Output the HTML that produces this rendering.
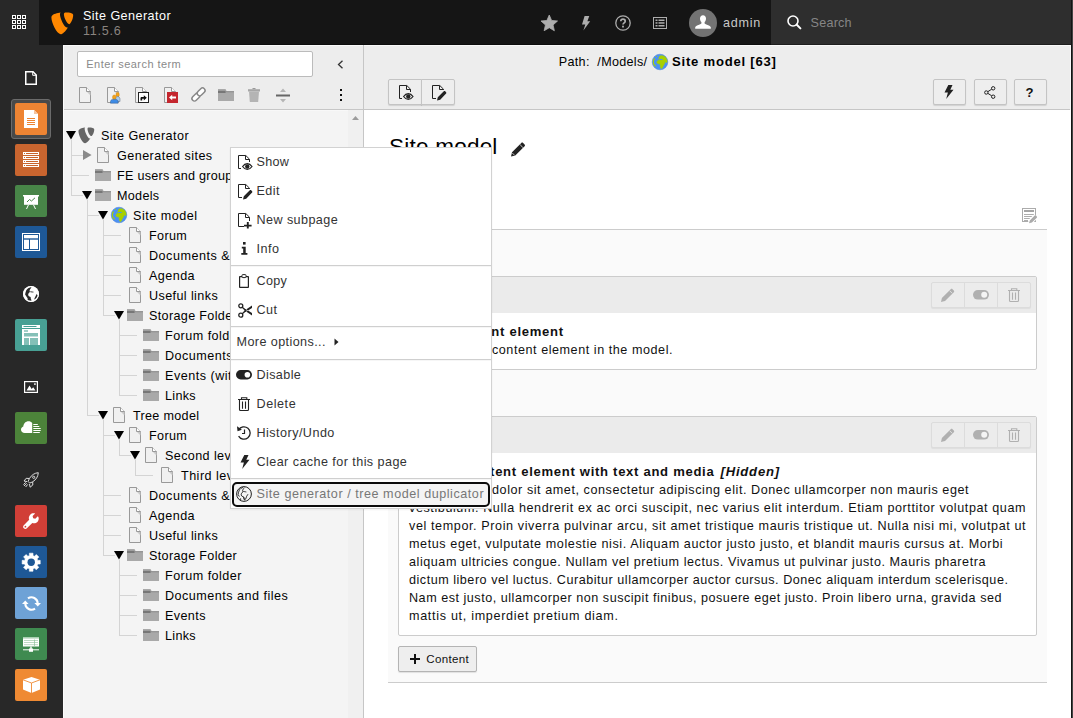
<!DOCTYPE html>
<html lang="en"><head><meta charset="utf-8"><title>Site Generator [TYPO3 CMS 11.5.6]</title>
<style>
html,body{margin:0;padding:0}
body{width:1073px;height:718px;overflow:hidden;position:relative;background:#fff;font-family:"Liberation Sans",sans-serif;font-size:12.6px;color:#000}
.t{position:absolute;white-space:pre;display:block}
.b{position:absolute;box-sizing:border-box}
svg{position:absolute;overflow:visible}

</style></head>
<body>
<!-- module content --><div class="b" style="left:364px;top:45px;width:707px;height:65px;background:#ededed;border-bottom:1px solid #c6c6c6"></div><div class="b" style="left:364px;top:45px;width:707px;height:1px;background:#f9f9f9;"></div><div class="b" style="left:1070px;top:45px;width:1px;height:65px;background:#f9f9f9;"></div><div class="b" style="left:1071px;top:45px;width:1px;height:673px;background:#141414;"></div><div class="b" style="left:1072px;top:45px;width:1px;height:673px;background:#444;"></div><span class="t" style="left:558.8px;top:53.0px;line-height:18px;font-size:12.6px;color:#000;letter-spacing:0.304px;">Path:  /Models/</span><svg style="left:652px;top:54px;" width="16" height="16" viewBox="0 0 16 16"><circle cx="8" cy="8" r="7.800" fill="#4c90f4" stroke="#447fd6" stroke-width=".5"/><path fill="#a7d000" d="M8.500 1.700 11 1.800 13.300 3 14.700 5 15.200 7.400 14.700 8.700 13.700 7.600 12.700 9.400 11.300 11.800 10.300 14.100 9.300 14.800 8.500 13.800 8.200 11.800 8 10.100 6 9.800 4.800 8.700 5 7.400 6 6.600 7.300 6.200 6.700 5.500 7 4.400 7.300 2.700z" stroke="#a7d000" stroke-width=".5" stroke-linejoin="round"/><rect x="7.100" y="5.100" width="3.600" height="1" rx=".5" fill="#4c90f4"/><path fill="#a7d000" d="M1 6 1.800 4.400 2.700 4 2.800 5.400 2 6.700 1.800 8.700 2.700 10.800 3.800 11.800 3.700 12.800 2.300 12.100 1.200 10.400 .8 8.400zM4 2h1v.9H4z"/></svg><span class="t" style="left:672px;top:53.0px;line-height:18px;font-size:13.08px;color:#000;font-weight:700;letter-spacing:0.774px;">Site model [63]</span><div class="b" style="left:388px;top:79px;width:34px;height:26px;background:#eeeeee;border:1px solid #c4c4c4;border-radius:2px 0 0 2px;box-shadow:0 1px 1px rgba(0,0,0,.12)"></div><div class="b" style="left:421px;top:79px;width:34px;height:26px;background:#eeeeee;border:1px solid #c4c4c4;border-radius:0 2px 2px 0;box-shadow:0 1px 1px rgba(0,0,0,.12)"></div><div class="b" style="left:933px;top:79px;width:33px;height:26px;background:#eeeeee;border:1px solid #c4c4c4;border-radius:2px;box-shadow:0 1px 1px rgba(0,0,0,.12)"></div><div class="b" style="left:974px;top:79px;width:33px;height:26px;background:#eeeeee;border:1px solid #c4c4c4;border-radius:2px;box-shadow:0 1px 1px rgba(0,0,0,.12)"></div><div class="b" style="left:1014px;top:79px;width:33px;height:26px;background:#eeeeee;border:1px solid #c4c4c4;border-radius:2px;box-shadow:0 1px 1px rgba(0,0,0,.12)"></div><svg style="left:399px;top:85px;" width="12" height="14" viewBox="0 0 12 14"><path d="M.5.500h7.300l3.700 3.700V13.500H.5z" fill="none" stroke="#222" stroke-width="1"/><path d="M7.500.8v3.700h3.700" fill="none" stroke="#222" stroke-width="1"/></svg><div class="b" style="left:402px;top:92px;width:10px;height:8px;background:#eee;"></div><svg style="left:402.7px;top:93px;" width="10.6" height="7" viewBox="0 0 10.6 7"><path d="M.6 3.500C1.900 1.600 3.500.6 5.300.6S8.700 1.600 10 3.500C8.700 5.400 7.100 6.400 5.300 6.400S1.900 5.400.6 3.500z" fill="#eee" stroke="#222" stroke-width="1.200"/><circle cx="5.300" cy="3.500" r="2.200" fill="#222"/></svg><svg style="left:432px;top:85px;" width="12" height="14" viewBox="0 0 12 14"><path d="M.5.500h7.300l3.700 3.700V13.500H.5z" fill="none" stroke="#222" stroke-width="1"/><path d="M7.500.8v3.700h3.700" fill="none" stroke="#222" stroke-width="1"/></svg><div class="b" style="left:436px;top:90px;width:10px;height:10px;background:#eee;"></div><svg style="left:436.5px;top:90.5px;" width="9.5" height="9.5" viewBox="0 0 9.5 9.5"><path d="M0 9.500 .8 6.300 6.800.3c.4-.4 1-.4 1.400 0l.9.900c.4.400.4 1 0 1.400L3.200 8.700z" fill="#222"/></svg><svg style="left:944px;top:85px;" width="10" height="14" viewBox="0 0 10 14"><path d="M4.300 0h4.200L6.300 4.700h3.200L2.200 14l1.700-6.500H.5z" fill="#222"/></svg><svg style="left:984.4px;top:85.5px;" width="12" height="13" viewBox="0 0 12 13"><circle cx="2.300" cy="6.500" r="1.700" fill="none" stroke="#222" stroke-width="1"/><circle cx="9.200" cy="2.300" r="1.700" fill="none" stroke="#222" stroke-width="1"/><circle cx="9.200" cy="10.700" r="1.700" fill="none" stroke="#222" stroke-width="1"/><path d="M3.800 5.700 7.700 3.200M3.800 7.300 7.700 9.800" stroke="#222" stroke-width="1" fill="none"/></svg><span class="t" style="left:1025.5px;top:83.5px;line-height:18px;font-size:13.08px;color:#111;font-weight:700;letter-spacing:-1.031px;">?</span><span class="t" style="left:389px;top:132.4px;line-height:30px;font-size:22.5px;color:#000;letter-spacing:0.230px;">Site model</span><svg style="left:510.5px;top:141.5px;" width="15" height="15" viewBox="0 0 15 15"><path d="M0 14.500 1 10.200 10.300.900c.5-.5 1.300-.5 1.800 0l1.500 1.500c.5.500.5 1.300 0 1.800L4.300 13.500z" fill="#222"/><path d="M9.200 2.800 11.800 5.400" stroke="#fff" stroke-width=".8"/><path d="M1.300 11 3.600 13.300" stroke="#fff" stroke-width=".7"/></svg><svg style="left:1022px;top:208px;" width="16" height="16" viewBox="0 0 16 16"><rect x=".5" y=".5" width="13" height="13" fill="#fff" stroke="#ababab"/><rect x="2" y="2" width="10" height="2" fill="#a4a4a4"/><rect x="2" y="6" width="10" height="1" fill="#adadad"/><rect x="2" y="8" width="9" height="1" fill="#adadad"/><rect x="2" y="10" width="6" height="1" fill="#adadad"/><rect x="2" y="12" width="4" height="1" fill="#adadad"/><path d="M6.300 12 12.300 6 16 9.700 10.500 15.200l-4.500 1.300z" fill="#fff"/><path d="M7 15.300 7.800 12.500 12.700 7.600c.4-.4.900-.4 1.300 0l.8.800c.4.400.4.900 0 1.300L9.900 14.600z" fill="#ababab"/></svg><div class="b" style="left:388px;top:229px;width:659px;height:454px;background:#fafafa;border-top:1px solid #ccc;border-bottom:1px solid #ccc"></div><div class="b" style="left:398px;top:276px;width:639px;height:94px;background:#fff;border:1px solid #ccc;border-radius:2px"></div><div class="b" style="left:399px;top:277px;width:637px;height:36px;background:#ebebeb;"></div><div class="b" style="left:931px;top:282px;width:100px;height:26px;background:#ececec;border:1px solid #dcdcdc;border-radius:2px;box-shadow:0 1px 1px rgba(0,0,0,.06)"></div><div class="b" style="left:964px;top:283px;width:1px;height:24px;background:#dcdcdc;"></div><div class="b" style="left:997px;top:283px;width:1px;height:24px;background:#dcdcdc;"></div><svg style="left:940.5px;top:287.5px;" width="14" height="14" viewBox="0 0 14 14"><path d="M0 14 .9 10 9.700 1.200c.5-.5 1.300-.5 1.800 0l1.300 1.300c.5.500.5 1.300 0 1.800L4 13.100z" fill="#b0b0b0"/><path d="M8.700 2.800 11.200 5.300" stroke="#ececec" stroke-width=".8"/></svg><svg style="left:972.5px;top:290px;" width="16" height="10" viewBox="0 0 16 10"><rect x="0" y="0" width="16" height="9.600" rx="4.800" fill="#b0b0b0"/><circle cx="11.200" cy="4.800" r="3" fill="#f4f4f4"/></svg><svg style="left:1008px;top:287.5px;" width="12" height="14" viewBox="0 0 12 14"><path d="M0 2.500h12M3.500 2.500V.700h5.300V2.500M1.500 2.500v10q0 1 1 1h7q1 0 1-1v-10" fill="none" stroke="#b0b0b0" stroke-width="1.100"/><path d="M4.500 4.500v7.200M7.500 4.500v7.200" fill="none" stroke="#b0b0b0" stroke-width="1.100"/></svg><span class="t" style="left:416.7px;top:323.0px;line-height:18px;font-size:13.08px;color:#111;font-weight:700;letter-spacing:0.711px;">First content element</span><span class="t" style="left:409px;top:341.0px;line-height:18px;font-size:12.6px;color:#111;letter-spacing:0.548px;">This is a first content element in the model.</span><div class="b" style="left:398px;top:416px;width:639px;height:220px;background:#fff;border:1px solid #ccc;border-radius:2px"></div><div class="b" style="left:399px;top:417px;width:637px;height:36px;background:#ebebeb;"></div><div class="b" style="left:931px;top:422px;width:100px;height:26px;background:#ececec;border:1px solid #dcdcdc;border-radius:2px;box-shadow:0 1px 1px rgba(0,0,0,.06)"></div><div class="b" style="left:964px;top:423px;width:1px;height:24px;background:#dcdcdc;"></div><div class="b" style="left:997px;top:423px;width:1px;height:24px;background:#dcdcdc;"></div><svg style="left:940.5px;top:427.5px;" width="14" height="14" viewBox="0 0 14 14"><path d="M0 14 .9 10 9.700 1.200c.5-.5 1.300-.5 1.800 0l1.300 1.300c.5.500.5 1.300 0 1.800L4 13.100z" fill="#b0b0b0"/><path d="M8.700 2.800 11.200 5.300" stroke="#ececec" stroke-width=".8"/></svg><svg style="left:972.5px;top:430px;" width="16" height="10" viewBox="0 0 16 10"><rect x="0" y="0" width="16" height="9.600" rx="4.800" fill="#b0b0b0"/><circle cx="11.200" cy="4.800" r="3" fill="#f4f4f4"/></svg><svg style="left:1008px;top:427.5px;" width="12" height="14" viewBox="0 0 12 14"><path d="M0 2.500h12M3.500 2.500V.700h5.300V2.500M1.500 2.500v10q0 1 1 1h7q1 0 1-1v-10" fill="none" stroke="#b0b0b0" stroke-width="1.100"/><path d="M4.500 4.500v7.200M7.500 4.500v7.200" fill="none" stroke="#b0b0b0" stroke-width="1.100"/></svg><span class="t" style="left:409px;top:463.0px;line-height:18px;font-size:13.08px;color:#111;font-weight:700;letter-spacing:0.697px;">Second content element with text and media </span><span class="t" style="left:720.5px;top:463.0px;line-height:18px;font-size:13.08px;color:#111;font-weight:700;font-style:italic;letter-spacing:0.796px;">[Hidden]</span><span class="t" style="left:409px;top:481.0px;line-height:18px;font-size:12.6px;color:#111;letter-spacing:0.561px;">Lorem ipsum dolor sit amet, consectetur adipiscing elit. Donec ullamcorper non mauris eget</span><span class="t" style="left:409px;top:499.0px;line-height:18px;font-size:12.6px;color:#111;letter-spacing:0.583px;">vestibulum. Nulla hendrerit ex ac orci suscipit, nec varius elit interdum. Etiam porttitor volutpat quam</span><span class="t" style="left:409px;top:517.0px;line-height:18px;font-size:12.6px;color:#111;letter-spacing:0.600px;">vel tempor. Proin viverra pulvinar arcu, sit amet tristique mauris tristique ut. Nulla nisi mi, volutpat ut</span><span class="t" style="left:409px;top:535.0px;line-height:18px;font-size:12.6px;color:#111;letter-spacing:0.585px;">metus eget, vulputate molestie nisi. Aliquam auctor justo justo, et blandit mauris cursus at. Morbi</span><span class="t" style="left:409px;top:553.0px;line-height:18px;font-size:12.6px;color:#111;letter-spacing:0.550px;">aliquam ultricies congue. Nullam vel pretium lectus. Vivamus ut pulvinar justo. Mauris pharetra</span><span class="t" style="left:409px;top:571.0px;line-height:18px;font-size:12.6px;color:#111;letter-spacing:0.517px;">dictum libero vel luctus. Curabitur ullamcorper auctor cursus. Donec aliquam interdum scelerisque.</span><span class="t" style="left:409px;top:589.0px;line-height:18px;font-size:12.6px;color:#111;letter-spacing:0.517px;">Nam est justo, ullamcorper non suscipit finibus, posuere eget justo. Proin libero urna, gravida sed</span><span class="t" style="left:409px;top:607.0px;line-height:18px;font-size:12.6px;color:#111;letter-spacing:0.690px;">mattis ut, imperdiet pretium diam.</span><div class="b" style="left:398px;top:646px;width:79px;height:26px;background:#eeeeee;border:1px solid #b4b4b4;border-radius:2px;box-shadow:0 1px 1px rgba(0,0,0,.1)"></div><svg style="left:410px;top:654px;" width="10" height="10" viewBox="0 0 10 10"><path d="M5 0v10M0 5h10" stroke="#111" stroke-width="2"/></svg><span class="t" style="left:426.3px;top:650.7px;line-height:16px;font-size:11.55px;color:#111;letter-spacing:0.315px;">Content</span><!-- page tree --><div class="b" style="left:63px;top:45px;width:301px;height:673px;background:#f4f4f4;border-right:1px solid #c6c6c6"></div><div class="b" style="left:63px;top:45px;width:300px;height:65px;background:#ededed;border-bottom:1px solid #c6c6c6"></div><div class="b" style="left:63px;top:45px;width:300px;height:1px;background:#fafafa;"></div><div class="b" style="left:63px;top:45px;width:1px;height:673px;background:#fcfcfc;"></div><div class="b" style="left:64px;top:110px;width:284px;height:1px;background:#f8f8f8;"></div><div class="b" style="left:77px;top:51px;width:236px;height:26px;background:#fff;border:1px solid #bbb;border-radius:2px"></div><span class="t" style="left:86.3px;top:56.099999999999994px;line-height:16px;font-size:11.03px;color:#8a8a8a;letter-spacing:0.433px;">Enter search term</span><svg style="left:336.5px;top:60px;" width="7" height="9" viewBox="0 0 7 9"><path d="M5.500 .7 1.500 4.500l4 3.800" fill="none" stroke="#333" stroke-width="1.300"/></svg><svg style="left:79px;top:87px;" width="12" height="16" viewBox="0 0 12 16"><path d="M.5.500h7l4 4V15.500H.5z" fill="#f0f0f0" stroke="#999" stroke-width="1"/><path d="M7.500.5v4h4z" fill="#fff"/><path d="M7.500 4.500h4v4z" fill="#c9c9c9"/><path d="M7.500.5v4h4" fill="none" stroke="#999" stroke-width="1"/></svg><svg style="left:107px;top:87px;" width="12" height="16" viewBox="0 0 12 16"><path d="M.5.500h7l4 4V15.500H.5z" fill="#f0f0f0" stroke="#999" stroke-width="1"/><path d="M7.500.5v4h4z" fill="#fff"/><path d="M7.500 4.500h4v4z" fill="#c9c9c9"/><path d="M7.500.5v4h4" fill="none" stroke="#999" stroke-width="1"/></svg><svg style="left:110px;top:91.5px;" width="11" height="11.5" viewBox="0 0 11 11.5"><rect x="6" y=".5" width="3.200" height="4.200" rx="1.400" fill="#f3a21b" stroke="#c98410" stroke-width=".4"/><path d="M5.200 9V7c0-1.500 1-2.400 2.400-2.400S10 5.500 10 7v2.500z" fill="#a9cdf0" stroke="#5a6f86" stroke-width=".5"/><rect x="2.600" y="3" width="3.400" height="4.500" rx="1.500" fill="#f3a21b" stroke="#c98410" stroke-width=".4"/><path d="M.5 11.200V9.600C.5 8 2 7.200 4.300 7.200S8.100 8 8.100 9.600v1.600z" fill="#3d8be6" stroke="#3b5f8a" stroke-width=".5"/></svg><svg style="left:135px;top:87px;" width="12" height="16" viewBox="0 0 12 16"><path d="M.5.500h7l4 4V15.500H.5z" fill="#f0f0f0" stroke="#999" stroke-width="1"/><path d="M7.500.5v4h4z" fill="#fff"/><path d="M7.500 4.500h4v4z" fill="#c9c9c9"/><path d="M7.500.5v4h4" fill="none" stroke="#999" stroke-width="1"/></svg><svg style="left:138px;top:92px;" width="11" height="11" viewBox="0 0 11 11"><rect x=".5" y=".5" width="10" height="10" fill="#fff" stroke="#222"/><path d="M2.500 8.500V6.200c0-.8.500-1.300 1.300-1.300h2V3.200L8.800 5.800 5.800 8.400V6.700H4.200v1.800z" fill="#111"/></svg><svg style="left:164px;top:87px;" width="12" height="16" viewBox="0 0 12 16"><path d="M.5.500h7l4 4V15.500H.5z" fill="#f0f0f0" stroke="#999" stroke-width="1"/><path d="M7.500.5v4h4z" fill="#fff"/><path d="M7.500 4.500h4v4z" fill="#c9c9c9"/><path d="M7.500.5v4h4" fill="none" stroke="#999" stroke-width="1"/></svg><svg style="left:167px;top:92px;" width="11" height="11" viewBox="0 0 11 11"><rect x="0" y="0" width="11" height="11" fill="#c4262e"/><path d="M2 5.500 5.200 2.700v1.900h3.800v1.800H5.200v1.900z" fill="#fff"/></svg><svg style="left:190.5px;top:87px;" width="15" height="15" viewBox="0 0 15 15"><g transform="rotate(-45 7.500 7.500)" fill="#fff" stroke="#888" stroke-width="1.500"><rect x="-.7" y="5" width="9" height="5" rx="2.500"/><rect x="6.700" y="5" width="9" height="5" rx="2.500"/></g></svg><svg style="left:218px;top:89px;" width="16" height="12" viewBox="0 0 16 12"><path d="M0 0h7.500l1.200 2.200H16V12H0z" fill="#a9a9a9"/><path d="M0 1.800h7.600V4H0z" fill="#777"/><path d="M7.600 2.200H16v1H8.200z" fill="#8a8a8a"/></svg><svg style="left:248px;top:88px;" width="12" height="14" viewBox="0 0 12 14"><path d="M4.500 0h3v1.200h-3z" fill="#999"/><path d="M0 1.200h12v2.300H0z" fill="#a6a6a6"/><path d="M1 3.500h10l-.8 10.500H1.800z" fill="#b4b4b4"/></svg><svg style="left:276px;top:87.5px;" width="14" height="15" viewBox="0 0 14 15"><path d="M7 .5 10 4H4z" fill="#b5b5b5"/><rect x="0" y="6.500" width="14" height="2" fill="#666"/><path d="M7 14.500 10 11H4z" fill="#b5b5b5"/></svg><svg style="left:339.5px;top:89px;" width="2" height="12" viewBox="0 0 2 12"><rect width="2" height="2" y="0" fill="#111"/><rect width="2" height="2" y="5" fill="#111"/><rect width="2" height="2" y="10" fill="#111"/></svg><div class="b" style="left:348px;top:110px;width:15px;height:608px;background:#f0f0f0;"></div><svg style="left:352px;top:116px;" width="7" height="4" viewBox="0 0 7 4"><path d="M3.500 0 7 4H0z" fill="#9c9c9c"/></svg><div class="b" style="left:71px;top:140px;width:1px;height:56px;background:#d4d4d4;"></div><div class="b" style="left:71px;top:155px;width:12px;height:1px;background:#d4d4d4;"></div><div class="b" style="left:71px;top:175px;width:18px;height:1px;background:#d4d4d4;"></div><div class="b" style="left:71px;top:195px;width:12px;height:1px;background:#d4d4d4;"></div><div class="b" style="left:87px;top:200px;width:1px;height:216px;background:#d4d4d4;"></div><div class="b" style="left:87px;top:215px;width:12px;height:1px;background:#d4d4d4;"></div><div class="b" style="left:103px;top:220px;width:1px;height:96px;background:#d4d4d4;"></div><div class="b" style="left:103px;top:235px;width:18px;height:1px;background:#d4d4d4;"></div><div class="b" style="left:103px;top:255px;width:18px;height:1px;background:#d4d4d4;"></div><div class="b" style="left:103px;top:275px;width:18px;height:1px;background:#d4d4d4;"></div><div class="b" style="left:103px;top:295px;width:18px;height:1px;background:#d4d4d4;"></div><div class="b" style="left:103px;top:315px;width:12px;height:1px;background:#d4d4d4;"></div><div class="b" style="left:119px;top:320px;width:1px;height:76px;background:#d4d4d4;"></div><div class="b" style="left:119px;top:335px;width:18px;height:1px;background:#d4d4d4;"></div><div class="b" style="left:119px;top:355px;width:18px;height:1px;background:#d4d4d4;"></div><div class="b" style="left:119px;top:375px;width:18px;height:1px;background:#d4d4d4;"></div><div class="b" style="left:119px;top:395px;width:18px;height:1px;background:#d4d4d4;"></div><div class="b" style="left:87px;top:415px;width:12px;height:1px;background:#d4d4d4;"></div><div class="b" style="left:103px;top:420px;width:1px;height:136px;background:#d4d4d4;"></div><div class="b" style="left:103px;top:435px;width:12px;height:1px;background:#d4d4d4;"></div><div class="b" style="left:119px;top:440px;width:1px;height:16px;background:#d4d4d4;"></div><div class="b" style="left:119px;top:455px;width:12px;height:1px;background:#d4d4d4;"></div><div class="b" style="left:135px;top:460px;width:1px;height:16px;background:#d4d4d4;"></div><div class="b" style="left:135px;top:475px;width:18px;height:1px;background:#d4d4d4;"></div><div class="b" style="left:103px;top:495px;width:18px;height:1px;background:#d4d4d4;"></div><div class="b" style="left:103px;top:515px;width:18px;height:1px;background:#d4d4d4;"></div><div class="b" style="left:103px;top:535px;width:18px;height:1px;background:#d4d4d4;"></div><div class="b" style="left:103px;top:555px;width:12px;height:1px;background:#d4d4d4;"></div><div class="b" style="left:119px;top:560px;width:1px;height:76px;background:#d4d4d4;"></div><div class="b" style="left:119px;top:575px;width:18px;height:1px;background:#d4d4d4;"></div><div class="b" style="left:119px;top:595px;width:18px;height:1px;background:#d4d4d4;"></div><div class="b" style="left:119px;top:615px;width:18px;height:1px;background:#d4d4d4;"></div><div class="b" style="left:119px;top:635px;width:18px;height:1px;background:#d4d4d4;"></div><svg style="left:66px;top:131px;" width="10" height="9" viewBox="0 0 10 9"><path d="M0 0h10L5 8.600z" fill="#000"/></svg><svg style="left:76.4px;top:124.5px;" width="20.7" height="20.7" viewBox="0 0 16 16"><path fill="#666" d="M11.100 10.300c-.2 0-.3.100-.5.100-1.600 0-3.900-5.500-3.900-7.300 0-.700.200-.9.400-1.100-1.900.200-4.200.9-4.900 1.800-.2.200-.3.600-.3 1 0 2.900 3 9.300 5.200 9.300 1 0 2.700-1.600 4-3.800M10.100 1.900c2 0 4 .3 4 1.500 0 2.300-1.500 5.100-2.200 5.100-1.300 0-3-3.700-3-5.500 0-.800.300-1.100 1.200-1.100"/></svg><span class="t" style="left:101px;top:126.0px;line-height:20px;font-size:12.6px;color:#000;letter-spacing:0.436px;">Site Generator</span><svg style="left:83px;top:150px;" width="9" height="10" viewBox="0 0 9 10"><path d="M0 0v10L8.600 5z" fill="#8a8a8a"/></svg><svg style="left:97px;top:147px;" width="12" height="16" viewBox="0 0 12 16"><path d="M.5.500h7l4 4V15.500H.5z" fill="#f0f0f0" stroke="#999" stroke-width="1"/><path d="M7.500.5v4h4z" fill="#fff"/><path d="M7.500 4.500h4v4z" fill="#c9c9c9"/><path d="M7.500.5v4h4" fill="none" stroke="#999" stroke-width="1"/></svg><span class="t" style="left:117px;top:146.0px;line-height:20px;font-size:12.6px;color:#000;letter-spacing:0.447px;">Generated sites</span><svg style="left:95px;top:169px;" width="16" height="12" viewBox="0 0 16 12"><path d="M0 0h7.500l1.200 2.200H16V12H0z" fill="#a9a9a9"/><path d="M0 1.800h7.600V4H0z" fill="#777"/><path d="M7.600 2.200H16v1H8.200z" fill="#8a8a8a"/></svg><span class="t" style="left:117px;top:166.0px;line-height:20px;font-size:12.6px;color:#000;letter-spacing:0.278px;">FE users and groups</span><svg style="left:82px;top:191px;" width="10" height="9" viewBox="0 0 10 9"><path d="M0 0h10L5 8.600z" fill="#000"/></svg><svg style="left:95px;top:189px;" width="16" height="12" viewBox="0 0 16 12"><path d="M0 0h7.500l1.200 2.200H16V12H0z" fill="#a9a9a9"/><path d="M0 1.800h7.600V4H0z" fill="#777"/><path d="M7.600 2.200H16v1H8.200z" fill="#8a8a8a"/></svg><span class="t" style="left:117px;top:186.0px;line-height:20px;font-size:12.6px;color:#000;letter-spacing:0.304px;">Models</span><svg style="left:98px;top:211px;" width="10" height="9" viewBox="0 0 10 9"><path d="M0 0h10L5 8.600z" fill="#000"/></svg><svg style="left:111px;top:207px;" width="16" height="16" viewBox="0 0 16 16"><circle cx="8" cy="8" r="7.800" fill="#4c90f4" stroke="#447fd6" stroke-width=".5"/><path fill="#a7d000" d="M8.500 1.700 11 1.800 13.300 3 14.700 5 15.200 7.400 14.700 8.700 13.700 7.600 12.700 9.400 11.300 11.800 10.300 14.100 9.300 14.800 8.500 13.800 8.200 11.800 8 10.100 6 9.800 4.800 8.700 5 7.400 6 6.600 7.300 6.200 6.700 5.500 7 4.400 7.300 2.700z" stroke="#a7d000" stroke-width=".5" stroke-linejoin="round"/><rect x="7.100" y="5.100" width="3.600" height="1" rx=".5" fill="#4c90f4"/><path fill="#a7d000" d="M1 6 1.800 4.400 2.700 4 2.800 5.400 2 6.700 1.800 8.700 2.700 10.800 3.800 11.800 3.700 12.800 2.300 12.100 1.200 10.400 .8 8.400zM4 2h1v.9H4z"/></svg><span class="t" style="left:133px;top:206.0px;line-height:20px;font-size:12.6px;color:#000;letter-spacing:0.495px;">Site model</span><svg style="left:129px;top:227px;" width="12" height="16" viewBox="0 0 12 16"><path d="M.5.500h7l4 4V15.500H.5z" fill="#f0f0f0" stroke="#999" stroke-width="1"/><path d="M7.500.5v4h4z" fill="#fff"/><path d="M7.500 4.500h4v4z" fill="#c9c9c9"/><path d="M7.500.5v4h4" fill="none" stroke="#999" stroke-width="1"/></svg><span class="t" style="left:149px;top:226.0px;line-height:20px;font-size:12.6px;color:#000;letter-spacing:0.368px;">Forum</span><svg style="left:129px;top:247px;" width="12" height="16" viewBox="0 0 12 16"><path d="M.5.500h7l4 4V15.500H.5z" fill="#f0f0f0" stroke="#999" stroke-width="1"/><path d="M7.500.5v4h4z" fill="#fff"/><path d="M7.500 4.500h4v4z" fill="#c9c9c9"/><path d="M7.500.5v4h4" fill="none" stroke="#999" stroke-width="1"/></svg><span class="t" style="left:149px;top:246.0px;line-height:20px;font-size:12.6px;color:#000;letter-spacing:0.511px;">Documents &amp; files</span><svg style="left:129px;top:267px;" width="12" height="16" viewBox="0 0 12 16"><path d="M.5.500h7l4 4V15.500H.5z" fill="#f0f0f0" stroke="#999" stroke-width="1"/><path d="M7.500.5v4h4z" fill="#fff"/><path d="M7.500 4.500h4v4z" fill="#c9c9c9"/><path d="M7.500.5v4h4" fill="none" stroke="#999" stroke-width="1"/></svg><span class="t" style="left:149px;top:266.0px;line-height:20px;font-size:12.6px;color:#000;letter-spacing:0.432px;">Agenda</span><svg style="left:129px;top:287px;" width="12" height="16" viewBox="0 0 12 16"><path d="M.5.500h7l4 4V15.500H.5z" fill="#f0f0f0" stroke="#999" stroke-width="1"/><path d="M7.500.5v4h4z" fill="#fff"/><path d="M7.500 4.500h4v4z" fill="#c9c9c9"/><path d="M7.500.5v4h4" fill="none" stroke="#999" stroke-width="1"/></svg><span class="t" style="left:149px;top:286.0px;line-height:20px;font-size:12.6px;color:#000;letter-spacing:0.390px;">Useful links</span><svg style="left:114px;top:311px;" width="10" height="9" viewBox="0 0 10 9"><path d="M0 0h10L5 8.600z" fill="#000"/></svg><svg style="left:127px;top:309px;" width="16" height="12" viewBox="0 0 16 12"><path d="M0 0h7.500l1.200 2.200H16V12H0z" fill="#a9a9a9"/><path d="M0 1.800h7.600V4H0z" fill="#777"/><path d="M7.600 2.200H16v1H8.200z" fill="#8a8a8a"/></svg><span class="t" style="left:149px;top:306.0px;line-height:20px;font-size:12.6px;color:#000;letter-spacing:0.337px;">Storage Folder</span><svg style="left:143px;top:329px;" width="16" height="12" viewBox="0 0 16 12"><path d="M0 0h7.500l1.200 2.200H16V12H0z" fill="#a9a9a9"/><path d="M0 1.800h7.600V4H0z" fill="#777"/><path d="M7.600 2.200H16v1H8.200z" fill="#8a8a8a"/></svg><span class="t" style="left:165px;top:326.0px;line-height:20px;font-size:12.6px;color:#000;letter-spacing:0.462px;">Forum folder</span><svg style="left:143px;top:349px;" width="16" height="12" viewBox="0 0 16 12"><path d="M0 0h7.500l1.200 2.200H16V12H0z" fill="#a9a9a9"/><path d="M0 1.800h7.600V4H0z" fill="#777"/><path d="M7.600 2.200H16v1H8.200z" fill="#8a8a8a"/></svg><span class="t" style="left:165px;top:346.0px;line-height:20px;font-size:12.6px;color:#000;letter-spacing:0.489px;">Documents and files</span><svg style="left:143px;top:369px;" width="16" height="12" viewBox="0 0 16 12"><path d="M0 0h7.500l1.200 2.200H16V12H0z" fill="#a9a9a9"/><path d="M0 1.800h7.600V4H0z" fill="#777"/><path d="M7.600 2.200H16v1H8.200z" fill="#8a8a8a"/></svg><span class="t" style="left:165px;top:366.0px;line-height:20px;font-size:12.6px;color:#000;letter-spacing:0.496px;">Events (with calendar)</span><svg style="left:143px;top:389px;" width="16" height="12" viewBox="0 0 16 12"><path d="M0 0h7.500l1.200 2.200H16V12H0z" fill="#a9a9a9"/><path d="M0 1.800h7.600V4H0z" fill="#777"/><path d="M7.600 2.200H16v1H8.200z" fill="#8a8a8a"/></svg><span class="t" style="left:165px;top:386.0px;line-height:20px;font-size:12.6px;color:#000;letter-spacing:0.316px;">Links</span><svg style="left:98px;top:411px;" width="10" height="9" viewBox="0 0 10 9"><path d="M0 0h10L5 8.600z" fill="#000"/></svg><svg style="left:113px;top:407px;" width="12" height="16" viewBox="0 0 12 16"><path d="M.5.500h7l4 4V15.500H.5z" fill="#f0f0f0" stroke="#999" stroke-width="1"/><path d="M7.500.5v4h4z" fill="#fff"/><path d="M7.500 4.500h4v4z" fill="#c9c9c9"/><path d="M7.500.5v4h4" fill="none" stroke="#999" stroke-width="1"/></svg><span class="t" style="left:133px;top:406.0px;line-height:20px;font-size:12.6px;color:#000;letter-spacing:0.311px;">Tree model</span><svg style="left:114px;top:431px;" width="10" height="9" viewBox="0 0 10 9"><path d="M0 0h10L5 8.600z" fill="#000"/></svg><svg style="left:129px;top:427px;" width="12" height="16" viewBox="0 0 12 16"><path d="M.5.500h7l4 4V15.500H.5z" fill="#f0f0f0" stroke="#999" stroke-width="1"/><path d="M7.500.5v4h4z" fill="#fff"/><path d="M7.500 4.500h4v4z" fill="#c9c9c9"/><path d="M7.500.5v4h4" fill="none" stroke="#999" stroke-width="1"/></svg><span class="t" style="left:149px;top:426.0px;line-height:20px;font-size:12.6px;color:#000;letter-spacing:0.368px;">Forum</span><svg style="left:130px;top:451px;" width="10" height="9" viewBox="0 0 10 9"><path d="M0 0h10L5 8.600z" fill="#000"/></svg><svg style="left:145px;top:447px;" width="12" height="16" viewBox="0 0 12 16"><path d="M.5.500h7l4 4V15.500H.5z" fill="#f0f0f0" stroke="#999" stroke-width="1"/><path d="M7.500.5v4h4z" fill="#fff"/><path d="M7.500 4.500h4v4z" fill="#c9c9c9"/><path d="M7.500.5v4h4" fill="none" stroke="#999" stroke-width="1"/></svg><span class="t" style="left:165px;top:446.0px;line-height:20px;font-size:12.6px;color:#000;letter-spacing:0.382px;">Second level</span><svg style="left:161px;top:467px;" width="12" height="16" viewBox="0 0 12 16"><path d="M.5.500h7l4 4V15.500H.5z" fill="#f0f0f0" stroke="#999" stroke-width="1"/><path d="M7.500.5v4h4z" fill="#fff"/><path d="M7.500 4.500h4v4z" fill="#c9c9c9"/><path d="M7.500.5v4h4" fill="none" stroke="#999" stroke-width="1"/></svg><span class="t" style="left:181px;top:466.0px;line-height:20px;font-size:12.6px;color:#000;letter-spacing:0.464px;">Third level</span><svg style="left:129px;top:487px;" width="12" height="16" viewBox="0 0 12 16"><path d="M.5.500h7l4 4V15.500H.5z" fill="#f0f0f0" stroke="#999" stroke-width="1"/><path d="M7.500.5v4h4z" fill="#fff"/><path d="M7.500 4.500h4v4z" fill="#c9c9c9"/><path d="M7.500.5v4h4" fill="none" stroke="#999" stroke-width="1"/></svg><span class="t" style="left:149px;top:486.0px;line-height:20px;font-size:12.6px;color:#000;letter-spacing:0.511px;">Documents &amp; files</span><svg style="left:129px;top:507px;" width="12" height="16" viewBox="0 0 12 16"><path d="M.5.500h7l4 4V15.500H.5z" fill="#f0f0f0" stroke="#999" stroke-width="1"/><path d="M7.500.5v4h4z" fill="#fff"/><path d="M7.500 4.500h4v4z" fill="#c9c9c9"/><path d="M7.500.5v4h4" fill="none" stroke="#999" stroke-width="1"/></svg><span class="t" style="left:149px;top:506.0px;line-height:20px;font-size:12.6px;color:#000;letter-spacing:0.432px;">Agenda</span><svg style="left:129px;top:527px;" width="12" height="16" viewBox="0 0 12 16"><path d="M.5.500h7l4 4V15.500H.5z" fill="#f0f0f0" stroke="#999" stroke-width="1"/><path d="M7.500.5v4h4z" fill="#fff"/><path d="M7.500 4.500h4v4z" fill="#c9c9c9"/><path d="M7.500.5v4h4" fill="none" stroke="#999" stroke-width="1"/></svg><span class="t" style="left:149px;top:526.0px;line-height:20px;font-size:12.6px;color:#000;letter-spacing:0.390px;">Useful links</span><svg style="left:114px;top:551px;" width="10" height="9" viewBox="0 0 10 9"><path d="M0 0h10L5 8.600z" fill="#000"/></svg><svg style="left:127px;top:549px;" width="16" height="12" viewBox="0 0 16 12"><path d="M0 0h7.500l1.200 2.200H16V12H0z" fill="#a9a9a9"/><path d="M0 1.800h7.600V4H0z" fill="#777"/><path d="M7.600 2.200H16v1H8.200z" fill="#8a8a8a"/></svg><span class="t" style="left:149px;top:546.0px;line-height:20px;font-size:12.6px;color:#000;letter-spacing:0.337px;">Storage Folder</span><svg style="left:143px;top:569px;" width="16" height="12" viewBox="0 0 16 12"><path d="M0 0h7.500l1.200 2.200H16V12H0z" fill="#a9a9a9"/><path d="M0 1.800h7.600V4H0z" fill="#777"/><path d="M7.600 2.200H16v1H8.200z" fill="#8a8a8a"/></svg><span class="t" style="left:165px;top:566.0px;line-height:20px;font-size:12.6px;color:#000;letter-spacing:0.462px;">Forum folder</span><svg style="left:143px;top:589px;" width="16" height="12" viewBox="0 0 16 12"><path d="M0 0h7.500l1.200 2.200H16V12H0z" fill="#a9a9a9"/><path d="M0 1.800h7.600V4H0z" fill="#777"/><path d="M7.600 2.200H16v1H8.200z" fill="#8a8a8a"/></svg><span class="t" style="left:165px;top:586.0px;line-height:20px;font-size:12.6px;color:#000;letter-spacing:0.489px;">Documents and files</span><svg style="left:143px;top:609px;" width="16" height="12" viewBox="0 0 16 12"><path d="M0 0h7.500l1.200 2.200H16V12H0z" fill="#a9a9a9"/><path d="M0 1.800h7.600V4H0z" fill="#777"/><path d="M7.600 2.200H16v1H8.200z" fill="#8a8a8a"/></svg><span class="t" style="left:165px;top:606.0px;line-height:20px;font-size:12.6px;color:#000;letter-spacing:0.386px;">Events</span><svg style="left:143px;top:629px;" width="16" height="12" viewBox="0 0 16 12"><path d="M0 0h7.500l1.200 2.200H16V12H0z" fill="#a9a9a9"/><path d="M0 1.800h7.600V4H0z" fill="#777"/><path d="M7.600 2.200H16v1H8.200z" fill="#8a8a8a"/></svg><span class="t" style="left:165px;top:626.0px;line-height:20px;font-size:12.6px;color:#000;letter-spacing:0.316px;">Links</span><!-- module menu --><div class="b" style="left:0px;top:45px;width:63px;height:673px;background:#282828;"></div><svg style="left:25px;top:71px;" width="12" height="14" viewBox="0 0 12 14"><path d="M.75.75h7.300l3.200 3.200v9.300H.75z" fill="none" stroke="#fff" stroke-width="1.500"/><path d="M7.700 1v3.300h3.300" fill="none" stroke="#fff" stroke-width="1"/></svg><div class="b" style="left:11px;top:99px;width:40px;height:40px;background:#494949;border:1px solid #6b6b6b;border-radius:3px"></div><div class="b" style="left:15px;top:103px;width:32px;height:32px;background:#ee8433;border-radius:2px"></div><svg style="left:24px;top:110px;" width="14" height="18" viewBox="0 0 14 18"><path d="M0 0h10l4 4v14H0z" fill="#fff"/><path d="M10 0v4h4z" fill="#f6c39c"/><rect x="3" y="8" width="8" height="1" fill="#ee8433"/><rect x="3" y="10" width="8" height="1" fill="#ee8433"/><rect x="3" y="12" width="8" height="1" fill="#ee8433"/><rect x="3" y="14" width="8" height="1" fill="#ee8433"/></svg><div class="b" style="left:15px;top:144px;width:32px;height:32px;background:#c9652f;border-radius:2px"></div><svg style="left:23px;top:152px;" width="16" height="15" viewBox="0 0 16 15"><rect x="0" y="0" width="16" height="3" fill="#fff"/><rect x="1" y="1" width="1" height="1" fill="#c9652f"/><rect x="3" y="1" width="12" height="1" fill="#c9652f"/><rect x="0" y="4" width="16" height="3" fill="#fff"/><rect x="1" y="5" width="1" height="1" fill="#c9652f"/><rect x="3" y="5" width="12" height="1" fill="#c9652f"/><rect x="0" y="8" width="16" height="3" fill="#fff"/><rect x="1" y="9" width="1" height="1" fill="#c9652f"/><rect x="3" y="9" width="12" height="1" fill="#c9652f"/><rect x="0" y="12" width="16" height="3" fill="#fff"/><rect x="1" y="13" width="1" height="1" fill="#c9652f"/><rect x="3" y="13" width="12" height="1" fill="#c9652f"/></svg><div class="b" style="left:15px;top:185px;width:32px;height:32px;background:#488548;border-radius:2px"></div><svg style="left:23px;top:195px;" width="16" height="14" viewBox="0 0 16 14"><rect x="0" y="0" width="16" height="1.500" fill="#fff"/><rect x="1" y="1" width="14" height="8.800" fill="#fff"/><path d="M4 7 6.500 4.500 8.500 6 12 2.800" fill="none" stroke="#488548" stroke-width="1"/><path d="M5.500 9.800 3.500 14M10.500 9.800 12.500 14" stroke="#fff" stroke-width="1"/></svg><div class="b" style="left:15px;top:226px;width:32px;height:32px;background:#1e5896;border-radius:2px"></div><svg style="left:22px;top:233px;" width="18" height="18" viewBox="0 0 18 18"><rect x=".5" y=".5" width="17" height="17" fill="none" stroke="#fff"/><rect x="2" y="2" width="14" height="3.300" fill="#fff"/><rect x="2" y="6.700" width="5" height="9.300" fill="#fff"/><rect x="8" y="6.700" width="8" height="9.300" fill="#fff"/></svg><svg style="left:23px;top:286px;" width="16" height="16" viewBox="0 0 16 16"><circle cx="8" cy="8" r="8" fill="#fff"/><path fill="#2a2a2a" d="M7.200 1.300 4.900 2.400 3.400 3.900 2.600 6.200 2.100 8.600 3.400 10.600 4.600 12.300 4.700 14.300 7.200 14.800 8.700 14.400 7.900 12.900 7.600 10.900 5.900 10.200 5.100 8.900 5.600 7.200 6.900 5.900 6.600 4.200 7.600 2.600 8.600 1.600z"/><path fill="#2a2a2a" d="M7.200 5.200 10.600 5.800 10.400 6.600 7.400 6.200zM13.600 7.900 14.800 9.600 13.900 11.300 12.300 12.900 11.100 13.600 11.900 11.600 12.900 9.600z"/><circle cx="8" cy="8" r="7.500" fill="none" stroke="#fff" stroke-width="1"/></svg><div class="b" style="left:15px;top:319px;width:32px;height:32px;background:#48a094;border-radius:2px"></div><svg style="left:22px;top:325px;" width="18" height="20" viewBox="0 0 18 20"><rect x="0" y="0" width="18" height="3" fill="#fff"/><rect x="1.500" y="1" width="13" height="1" fill="#48a094"/><rect x="0" y="4" width="18" height="16" fill="#fff"/><rect x="2" y="5.500" width="4" height="1" fill="#48a094"/><rect x="2" y="8" width="14" height="3.500" fill="#84c0b7"/><rect x="2" y="13" width="5" height="7" fill="#84c0b7"/><rect x="8" y="13" width="8" height="7" fill="#84c0b7"/></svg><svg style="left:24px;top:381px;" width="14" height="12" viewBox="0 0 14 12"><rect x=".6" y=".6" width="12.800" height="10.800" fill="none" stroke="#fff" stroke-width="1.200"/><path d="M2.500 9.500 5.500 4.500 7.700 8 9.200 6.300 11.500 9.500z" fill="#fff"/><rect x="10" y="2.200" width="1.800" height="1.800" fill="#ccc"/></svg><div class="b" style="left:15px;top:412px;width:32px;height:32px;background:#4c833a;border-radius:2px"></div><svg style="left:21px;top:421px;" width="20" height="12" viewBox="0 0 20 12"><path d="M3.700 12C1.600 12 0 10.600 0 8.700c0-1.500 1-2.700 2.300-3.100C2.500 2.500 4.800.3 7.500.3c1.500 0 2.800.6 3.700 1.600V12z" fill="#fff"/><rect x="12.300" y="3" width="4.500" height="1" fill="#fff"/><rect x="12.300" y="5" width="6" height="1" fill="#fff"/><rect x="12.300" y="7" width="7.400" height="1" fill="#fff"/><rect x="12.300" y="9" width="7.400" height="1" fill="#fff"/><rect x="12.300" y="11" width="6.500" height="1" fill="#fff"/></svg><svg style="left:23px;top:472px;" width="16" height="16" viewBox="0 0 16 16"><g fill="none" stroke="#ddd" stroke-width="1"><path d="M15.300.700c-3.800.3-6.700 2.300-8.900 5.800l-1.300 3 1.600 1.600 3-1.300c3.500-2.200 5.300-5.200 5.600-9.100z"/><path d="M6.400 6.500 3.200 6.300 1 9l3.100.600M9.700 9.800l.1 3.200L7.100 15.200 6.500 12M3.600 11.200 1 14M4.800 12.400 2.600 15M2.600 10.400.5 12.600"/><circle cx="10.700" cy="5.300" r="1.100"/></g></svg><div class="b" style="left:15px;top:505px;width:32px;height:32px;background:#d13f37;border-radius:2px"></div><svg style="left:22.5px;top:512.5px;" width="17" height="17" viewBox="0 0 17 17"><path d="M14.800 3.300 12.300 5.800 10.200 5.200 9.600 3.100 12.100.6C10.500 0 8.500.4 7.200 1.700 5.800 3.100 5.500 5.100 6.200 6.800L.8 12.200c-.9.900-.9 2.300 0 3.100.9.900 2.300.9 3.100 0l5.400-5.400c1.700.7 3.700.4 5.100-1 1.300-1.300 1.700-3.300 1-4.900z" fill="#fff"/><circle cx="2.400" cy="13.700" r=".9" fill="#d13f37"/></svg><div class="b" style="left:15px;top:546px;width:32px;height:32px;background:#1e5896;border-radius:2px"></div><svg style="left:21.7px;top:552.7px;" width="18.4" height="18.4" viewBox="0 0 18.4 18.4"><polygon points="7.39,2.65 7.37,0.18 11.03,0.18 11.01,2.65 12.55,3.28 14.28,1.53 16.87,4.12 15.12,5.85 15.75,7.39 18.22,7.37 18.22,11.03 15.75,11.01 15.12,12.55 16.87,14.28 14.28,16.87 12.55,15.12 11.01,15.75 11.03,18.22 7.37,18.22 7.39,15.75 5.85,15.12 4.12,16.87 1.53,14.28 3.28,12.55 2.65,11.01 0.18,11.03 0.18,7.37 2.65,7.39 3.28,5.85 1.53,4.12 4.12,1.53 5.85,3.28" fill="#fff" stroke="#fff" stroke-width=".6" stroke-linejoin="round"/><circle cx="9.200" cy="9.200" r="3.700" fill="#1e5896"/></svg><div class="b" style="left:15px;top:587px;width:32px;height:32px;background:#6ea2d6;border-radius:2px"></div><svg style="left:21.5px;top:595px;" width="19" height="17" viewBox="0 0 19 17"><path d="M5.940 3.420A6.200 6.200 0 0 1 15.700 8.500" fill="none" stroke="#fff" stroke-width="2"/><path d="M13.060 13.580A6.200 6.200 0 0 1 3.300 8.500" fill="none" stroke="#fff" stroke-width="2"/><path d="M12.400 8h6.600L15.700 11.600z" fill="#fff"/><path d="M0 9h6.600L3.300 5.400z" fill="#fff"/></svg><div class="b" style="left:15px;top:628px;width:32px;height:32px;background:#3f8a50;border-radius:2px"></div><svg style="left:22px;top:637px;" width="18" height="16" viewBox="0 0 18 16"><rect x="1" y="0" width="16" height="1.300" fill="#a8cfb1"/><rect x="1" y="1.300" width="16" height="8.200" fill="#fff"/><rect x="2" y="3.200" width="14" height=".6" fill="#8fc09b"/><rect x="2" y="5.400" width="14" height=".6" fill="#8fc09b"/><rect x="2" y="7.500" width="14" height=".6" fill="#8fc09b"/><rect x="12.300" y="2.500" width=".7" height="6.500" fill="#8fc09b"/><rect x="8.300" y="9.500" width="1.400" height="2.500" fill="#fff"/><rect x="7" y="11.500" width="4" height="3.300" fill="#fff"/><rect x="1" y="12.300" width="16" height="1" fill="#fff"/></svg><div class="b" style="left:15px;top:669px;width:32px;height:32px;background:#ef8a33;border-radius:2px"></div><svg style="left:23px;top:677px;" width="17" height="16" viewBox="0 0 17 16"><path d="M8.500 0 17 2.800V12.400L8.500 16 0 12.400V2.800z" fill="#fff"/><path d="M0 2.800 8.500 6 17 2.800M8.500 6V16" fill="none" stroke="#ef8a33" stroke-width=".9"/></svg><!-- topbar --><div class="b" style="left:0px;top:0px;width:1073px;height:45px;background:#151515;"></div><div class="b" style="left:0px;top:0px;width:39px;height:45px;background:#282828;"></div><svg style="left:12px;top:15px;" width="14" height="14" viewBox="0 0 14 14"><rect x="0.5" y="0.5" width="3" height="3" fill="none" stroke="#fff" stroke-width="1"/><rect x="5.5" y="0.5" width="3" height="3" fill="none" stroke="#fff" stroke-width="1"/><rect x="10.5" y="0.5" width="3" height="3" fill="none" stroke="#fff" stroke-width="1"/><rect x="0.5" y="5.5" width="3" height="3" fill="none" stroke="#fff" stroke-width="1"/><rect x="5.5" y="5.5" width="3" height="3" fill="none" stroke="#fff" stroke-width="1"/><rect x="10.5" y="5.5" width="3" height="3" fill="none" stroke="#fff" stroke-width="1"/><rect x="0.5" y="10.5" width="3" height="3" fill="none" stroke="#fff" stroke-width="1"/><rect x="5.5" y="10.5" width="3" height="3" fill="none" stroke="#fff" stroke-width="1"/><rect x="10.5" y="10.5" width="3" height="3" fill="none" stroke="#fff" stroke-width="1"/></svg><svg style="left:48px;top:9px;" width="28.6" height="28.6" viewBox="0 0 16 16"><path fill="#ff8700" d="M11.1 10.3c-.2 0-.3.1-.5.1-1.6 0-3.900-5.500-3.900-7.300 0-.7.200-.9.400-1.100-1.900.2-4.200.9-4.900 1.800-.2.200-.3.600-.3 1 0 2.900 3 9.300 5.200 9.300 1 0 2.700-1.600 4-3.800M10.100 1.900c2 0 4 .3 4 1.500 0 2.300-1.500 5.100-2.200 5.100-1.300 0-3-3.700-3-5.500 0-.800.300-1.100 1.200-1.100"/></svg><span class="t" style="left:83px;top:7.800000000000001px;line-height:16px;font-size:12.6px;color:#fff;letter-spacing:0.436px;">Site Generator</span><span class="t" style="left:83px;top:22.8px;line-height:16px;font-size:12.6px;color:#8a8480;letter-spacing:0.741px;">11.5.6</span><svg style="left:540.75px;top:14.7px;" width="16.5" height="17" viewBox="0 0 16.5 17"><polygon points="8.25,0.00 10.60,5.46 16.52,6.01 12.05,9.94 13.36,15.74 8.25,12.70 3.14,15.74 4.45,9.94 -0.02,6.01 5.90,5.46" fill="#adadad" stroke="#adadad" stroke-width=".8" stroke-linejoin="round"/></svg><svg style="left:581.9px;top:15.7px;" width="8.2" height="14.5" viewBox="0 0 8.2 14.5"><path fill="#adadad" d="M2.600 0h4.700L5.400 5.200h2.800L1.400 14.500 3.300 8.500H0z"/></svg><svg style="left:615px;top:15px;" width="16" height="16" viewBox="0 0 16 16"><circle cx="8" cy="8" r="7.200" fill="none" stroke="#adadad" stroke-width="1.300"/><path fill="none" stroke="#adadad" stroke-width="1.700" d="M5.800 6.300c0-1.300 1-2.100 2.200-2.100s2.200.8 2.200 2c0 1.600-2.200 1.700-2.200 3.400"/><rect x="7.100" y="10.700" width="1.800" height="1.800" fill="#adadad"/></svg><svg style="left:653px;top:17px;" width="14" height="12" viewBox="0 0 14 12"><rect x=".5" y=".5" width="13" height="11" fill="none" stroke="#adadad"/><rect x="2.500" y="2.500" width="2" height="1.500" fill="#adadad"/><rect x="5.500" y="2.500" width="6" height="1.500" fill="#adadad"/><rect x="2.500" y="5.200" width="2" height="1.500" fill="#adadad"/><rect x="5.500" y="5.200" width="6" height="1.500" fill="#adadad"/><rect x="2.500" y="8" width="2" height="1.500" fill="#adadad"/><rect x="5.500" y="8" width="6" height="1.500" fill="#adadad"/></svg><svg style="left:689px;top:9px;" width="28" height="28" viewBox="0 0 28 28"><circle cx="14" cy="14" r="14" fill="#737373"/><path fill="#fff" d="M14 6.200c-1.800 0-3 1.300-3 3.200 0 1.500.5 2.900 1.400 3.600v1.400c-.7.900-2.500 1.300-4.300 2-1 .4-1.600 1-1.900 1.900v1.500h15.600v-1.500c-.3-.9-.9-1.500-1.900-1.900-1.800-.7-3.600-1.100-4.300-2V13c.9-.7 1.400-2.100 1.400-3.600 0-1.900-1.200-3.200-3-3.200z"/></svg><span class="t" style="left:723px;top:14.600000000000001px;line-height:16px;font-size:12.6px;color:#c8c8c8;letter-spacing:0.733px;">admin</span><div class="b" style="left:771px;top:0px;width:302px;height:45px;background:#2e2e2e;"></div><svg style="left:787px;top:15px;" width="14" height="14" viewBox="0 0 14 14"><circle cx="6" cy="6" r="5" fill="none" stroke="#fff" stroke-width="1.600"/><path d="M9.800 9.800 13.400 13.400" stroke="#fff" stroke-width="2" stroke-linecap="round"/></svg><span class="t" style="left:810.5px;top:14.600000000000001px;line-height:16px;font-size:12.6px;color:#868686;letter-spacing:0.241px;">Search</span><div class="b" style="left:63px;top:44px;width:1008px;height:1px;background:rgba(0,0,0,.35);"></div><div class="b" style="left:1071px;top:0px;width:1px;height:45px;background:#141414;"></div><div class="b" style="left:1072px;top:0px;width:1px;height:45px;background:#444;"></div><!-- context menu --><div class="b" style="left:230px;top:147px;width:262px;height:362px;background:#fff;border:1px solid #d2d2d2;box-shadow:0 1px 2px rgba(0,0,0,.05)"></div><span class="t" style="left:256.5px;top:152.0px;line-height:20px;font-size:12.6px;color:#333;letter-spacing:0.250px;">Show</span><span class="t" style="left:256.5px;top:181.0px;line-height:20px;font-size:12.6px;color:#333;letter-spacing:0.442px;">Edit</span><span class="t" style="left:256.5px;top:210.0px;line-height:20px;font-size:12.6px;color:#333;letter-spacing:0.421px;">New subpage</span><span class="t" style="left:256.5px;top:239.0px;line-height:20px;font-size:12.6px;color:#333;letter-spacing:0.487px;">Info</span><span class="t" style="left:256.5px;top:271.0px;line-height:20px;font-size:12.6px;color:#333;letter-spacing:0.299px;">Copy</span><span class="t" style="left:256.5px;top:300.0px;line-height:20px;font-size:12.6px;color:#333;letter-spacing:0.438px;">Cut</span><span class="t" style="left:256.5px;top:365.0px;line-height:20px;font-size:12.6px;color:#333;letter-spacing:0.387px;">Disable</span><span class="t" style="left:256.5px;top:394.0px;line-height:20px;font-size:12.6px;color:#333;letter-spacing:0.551px;">Delete</span><span class="t" style="left:256.5px;top:423.0px;line-height:20px;font-size:12.6px;color:#333;letter-spacing:0.461px;">History/Undo</span><span class="t" style="left:256.5px;top:452.0px;line-height:20px;font-size:12.6px;color:#333;letter-spacing:0.430px;">Clear cache for this page</span><span class="t" style="left:236.5px;top:332.0px;line-height:20px;font-size:12.6px;color:#333;letter-spacing:0.406px;">More options...</span><svg style="left:334px;top:338px;" width="5" height="8" viewBox="0 0 5 8"><path d="M.5 .5 4.500 4 .5 7.500z" fill="#222"/></svg><div class="b" style="left:231px;top:265px;width:260px;height:1px;background:#cfcfcf;"></div><div class="b" style="left:231px;top:266px;width:260px;height:1px;background:#f6f6f6;"></div><div class="b" style="left:231px;top:326px;width:260px;height:1px;background:#cfcfcf;"></div><div class="b" style="left:231px;top:327px;width:260px;height:1px;background:#f6f6f6;"></div><div class="b" style="left:231px;top:359px;width:260px;height:1px;background:#cfcfcf;"></div><div class="b" style="left:231px;top:360px;width:260px;height:1px;background:#f6f6f6;"></div><div class="b" style="left:231px;top:478px;width:260px;height:1px;background:#cfcfcf;"></div><div class="b" style="left:231px;top:479px;width:260px;height:1px;background:#f6f6f6;"></div><svg style="left:238px;top:155px;" width="12" height="14" viewBox="0 0 12 14"><path d="M.5.500h7.300l3.700 3.700V13.500H.5z" fill="none" stroke="#222" stroke-width="1"/><path d="M7.500.8v3.700h3.700" fill="none" stroke="#222" stroke-width="1"/></svg><div class="b" style="left:241px;top:162px;width:10px;height:8px;background:#fff;"></div><svg style="left:241.7px;top:163px;" width="10.6" height="7" viewBox="0 0 10.6 7"><path d="M.6 3.500C1.900 1.600 3.500.6 5.300.6S8.700 1.600 10 3.500C8.700 5.400 7.100 6.400 5.300 6.400S1.900 5.400.6 3.500z" fill="#fff" stroke="#222" stroke-width="1.200"/><circle cx="5.300" cy="3.500" r="2.200" fill="#222"/></svg><svg style="left:238px;top:184px;" width="12" height="14" viewBox="0 0 12 14"><path d="M.5.500h7.300l3.700 3.700V13.500H.5z" fill="none" stroke="#222" stroke-width="1"/><path d="M7.500.8v3.700h3.700" fill="none" stroke="#222" stroke-width="1"/></svg><div class="b" style="left:242px;top:189px;width:10px;height:10px;background:#fff;"></div><svg style="left:242.5px;top:189.5px;" width="9.5" height="9.5" viewBox="0 0 9.5 9.5"><path d="M0 9.500 .8 6.300 6.800.3c.4-.4 1-.4 1.400 0l.9.900c.4.400.4 1 0 1.400L3.200 8.700z" fill="#222"/></svg><svg style="left:238px;top:213px;" width="12" height="14" viewBox="0 0 12 14"><path d="M.5.500h7.300l3.700 3.700V13.500H.5z" fill="none" stroke="#222" stroke-width="1"/><path d="M7.500.8v3.700h3.700" fill="none" stroke="#222" stroke-width="1"/></svg><div class="b" style="left:243.5px;top:220.5px;width:9px;height:8px;background:#fff;"></div><svg style="left:244.2px;top:221.6px;" width="7.6" height="6.6" viewBox="0 0 7.6 6.6"><path d="M3.800 0v6.600M0 3.600h7.600" stroke="#222" stroke-width="1.900"/></svg><svg style="left:241px;top:242px;" width="7" height="13" viewBox="0 0 7 13"><rect x="2" y="0" width="2.600" height="2.600" fill="#222"/><path d="M.8 4.800h3.900v6.200h1.700v1.700H.3V11h1.900V6.500H.8z" fill="#222"/></svg><svg style="left:239px;top:274px;" width="10" height="14" viewBox="0 0 10 14"><rect x=".6" y="2.600" width="8.800" height="10.800" rx=".3" fill="#fff" stroke="#222" stroke-width="1.200"/><rect x="3" y=".6" width="4" height="3" rx=".8" fill="#fff" stroke="#222" stroke-width="1"/></svg><svg style="left:237.5px;top:302.5px;" width="15" height="15" viewBox="0 0 15 15"><circle cx="2.800" cy="2.800" r="2" fill="none" stroke="#222" stroke-width="1.300"/><circle cx="2.800" cy="12.200" r="2" fill="none" stroke="#222" stroke-width="1.300"/><path d="M4.200 4.200 8 7.500 4.200 10.800" fill="none" stroke="#222" stroke-width="1.300"/><path d="M5.500 8.200 14 2.600V5L7.600 9zM5.500 6.800 14 12.400V10L7.600 6z" fill="#222"/></svg><svg style="left:236px;top:370px;" width="16" height="10" viewBox="0 0 16 10"><rect x="0" y="0" width="16" height="9.400" rx="4.700" fill="#222"/><circle cx="11.400" cy="4.700" r="2.800" fill="#fff"/></svg><svg style="left:238px;top:397px;" width="12" height="14" viewBox="0 0 12 14"><path d="M0 2.500h12M3.500 2.500V.700h5.300V2.500M1.500 2.500v10q0 1 1 1h7q1 0 1-1v-10" fill="none" stroke="#222" stroke-width="1.100"/><path d="M4.500 4.500v7.200M7.500 4.500v7.200" fill="none" stroke="#222" stroke-width="1.100"/></svg><svg style="left:237px;top:426px;" width="14" height="14" viewBox="0 0 14 14"><path d="M1.600 3.900A6.200 6.200 0 1 1 1.600 10.100" fill="none" stroke="#222" stroke-width="1.300"/><path d="M0 .3 .5 5.300 4.900 3.700z" fill="#222"/><path d="M7.500 3.600V7.500H5" fill="none" stroke="#222" stroke-width="1.200"/></svg><svg style="left:239.5px;top:454.5px;" width="10" height="14" viewBox="0 0 10 14"><path d="M4.300 0h4.200L6.300 4.700h3.200L2.200 14l1.700-6.500H.5z" fill="#222"/></svg><div class="b" style="left:232px;top:481.8px;width:258px;height:25.5px;background:#f4f4f4;border:2px solid #0d0d0d;border-radius:5px"></div><svg style="left:236px;top:486px;" width="16" height="16" viewBox="0 0 16 16"><circle cx="8" cy="8" r="7.400" fill="none" stroke="#222" stroke-width="1"/><path d="M7.200 1.300 4.900 2.400 3.400 3.900 2.600 6.200 2.100 8.600 3.400 10.600M4.600 12.300 4.700 14.300M8.700 14.400 7.900 12.900 7.600 10.900 5.900 10.200 5.100 8.900 5.600 7.200 6.900 5.900 6.600 4.200 7.600 2.600 8.600 1.600" fill="none" stroke="#222" stroke-width=".9"/><path d="M7.600 10.900 8.600 13.600 9.600 13.200 10.700 10.200 12 8.200" fill="none" stroke="#222" stroke-width=".9"/><path d="M7.200 5.400 10.400 6" stroke="#222" stroke-width=".8"/></svg><span class="t" style="left:256.5px;top:484.0px;line-height:20px;font-size:12.6px;color:#777;letter-spacing:0.537px;">Site generator / tree model duplicator</span>
</body></html>
